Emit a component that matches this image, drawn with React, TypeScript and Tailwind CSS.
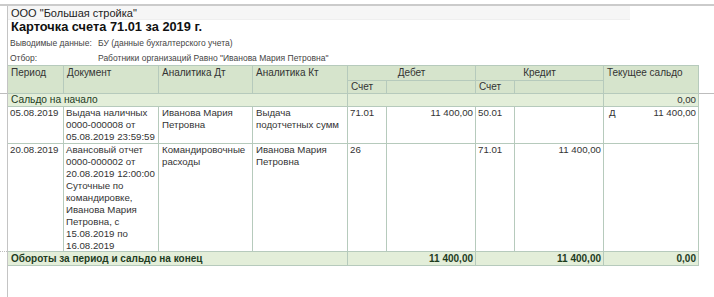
import React from "react";

const B = "border-[#b6cabc]";

function Cell({
  children,
  className = "",
}: {
  children?: React.ReactNode;
  className?: string;
}) {
  return (
    <div className={`border-r border-b ${B} overflow-visible ${className}`}>{children}</div>
  );
}

function Lines({ lines }: { lines: string[] }) {
  return (
    <>
      {lines.map((l, i) => (
        <div key={i} className="whitespace-nowrap">
          {l}
        </div>
      ))}
    </>
  );
}

export default function App() {
  const hdr = "bg-[#d6e4cc] text-[#333] text-[10px]";
  const body = "bg-white text-[#333] text-[9.7px] leading-[12px]";
  const sum = "bg-[#e3eed9] text-[#1e3c1e]";
  return (
    <div className="relative w-[714px] h-[297px] bg-white overflow-hidden font-['Liberation_Sans',Arial,sans-serif]">
      <div className="h-[4px]" />
      <div className="h-[2px] bg-[#cbcbcb]" />
      <div className="flex">
        <div className="w-[8px] h-[291px] shrink-0 border-r border-[#c4c4c4]" />
        <div className="flex-1">
          <div className="w-[622px] h-[14px] bg-[#f6f6f6] border-b border-[#efefef] pl-[3px] text-[11px] leading-[14px] text-[#222]">
            ООО "Большая стройка"
          </div>
          <div className="h-[16px] pl-[3px] text-[12.8px] font-bold leading-[14px] text-[#111]">
            Карточка счета 71.01 за 2019 г.
          </div>
          <div className="flex h-[15px] text-[8.5px] leading-[15px] text-[#444]">
            <div className="w-[90px] pl-[2px]">Выводимые данные:</div>
            <div>БУ (данные бухгалтерского учета)</div>
          </div>
          <div className="flex h-[14px] text-[8.5px] leading-[14px] text-[#444]">
            <div className="w-[90px] pl-[2px]">Отбор:</div>
            <div>Работники организаций Равно "Иванова Мария Петровна"</div>
          </div>

          <div
            className={`grid w-[691px] border-t ${B} grid-cols-[56px_95px_94px_95px_39px_89px_39px_89px_95px] grid-rows-[15px_13px_13px_37px_108px_14px]`}
          >
            {/* header */}
            <Cell className={`${hdr} row-span-2 pl-[3px] leading-[14px]`}>Период</Cell>
            <Cell className={`${hdr} row-span-2 pl-[3px] leading-[14px]`}>Документ</Cell>
            <Cell className={`${hdr} row-span-2 pl-[3px] leading-[14px]`}>Аналитика Дт</Cell>
            <Cell className={`${hdr} row-span-2 pl-[3px] leading-[14px]`}>Аналитика Кт</Cell>
            <Cell className={`${hdr} col-span-2 text-center leading-[14px]`}>Дебет</Cell>
            <Cell className={`${hdr} col-span-2 text-center leading-[14px]`}>Кредит</Cell>
            <Cell className={`${hdr} row-span-2 pl-[3px] leading-[14px]`}>Текущее сальдо</Cell>
            <Cell className={`${hdr} pl-[3px] leading-[12px]`}>Счет</Cell>
            <Cell className={hdr} />
            <Cell className={`${hdr} pl-[3px] leading-[12px]`}>Счет</Cell>
            <Cell className={hdr} />

            {/* opening balance */}
            <Cell className={`${sum} col-span-4 pl-[3px] text-[10.2px] leading-[12px]`}>Сальдо на начало</Cell>
            <Cell className={`${sum} col-span-4`} />
            <Cell className={`${sum} pr-[2px] text-right text-[9.7px] leading-[12px] text-[#333]`}>0,00</Cell>

            {/* row 1 */}
            <Cell className={`${body} pl-[2px]`}>05.08.2019</Cell>
            <Cell className={`${body} pl-[2px]`}>
              <Lines lines={["Выдача наличных", "0000-000008 от", "05.08.2019 23:59:59"]} />
            </Cell>
            <Cell className={`${body} pl-[3px]`}>
              <Lines lines={["Иванова Мария", "Петровна"]} />
            </Cell>
            <Cell className={`${body} pl-[3px]`}>
              <Lines lines={["Выдача", "подотчетных сумм"]} />
            </Cell>
            <Cell className={`${body} pl-[2px]`}>71.01</Cell>
            <Cell className={`${body} pr-[2px] text-right`}>11&nbsp;400,00</Cell>
            <Cell className={`${body} pl-[2px]`}>50.01</Cell>
            <Cell className={body} />
            <Cell className={`${body} flex justify-between pl-[5px] pr-[2px]`}>
              <span>Д</span>
              <span>11&nbsp;400,00</span>
            </Cell>

            {/* row 2 */}
            <Cell className={`${body} pl-[2px]`}>20.08.2019</Cell>
            <Cell className={`${body} pl-[2px]`}>
              <Lines
                lines={[
                  "Авансовый отчет",
                  "0000-000002 от",
                  "20.08.2019 12:00:00",
                  "Суточные по",
                  "командировке,",
                  "Иванова Мария",
                  "Петровна, с",
                  "15.08.2019 по",
                  "16.08.2019",
                ]}
              />
            </Cell>
            <Cell className={`${body} pl-[3px]`}>
              <Lines lines={["Командировочные", "расходы"]} />
            </Cell>
            <Cell className={`${body} pl-[3px]`}>
              <Lines lines={["Иванова Мария", "Петровна"]} />
            </Cell>
            <Cell className={`${body} pl-[2px]`}>26</Cell>
            <Cell className={body} />
            <Cell className={`${body} pl-[2px]`}>71.01</Cell>
            <Cell className={`${body} pr-[2px] text-right`}>11&nbsp;400,00</Cell>
            <Cell className={body} />

            {/* totals */}
            <Cell className={`${sum} col-span-4 pl-[3px] text-[10px] font-bold leading-[13px]`}>
              Обороты за период и сальдо на конец
            </Cell>
            <Cell className={`${sum} col-span-2 pr-[2px] text-right text-[10px] font-bold leading-[13px]`}>
              11&nbsp;400,00
            </Cell>
            <Cell className={`${sum} col-span-2 pr-[2px] text-right text-[10px] font-bold leading-[13px]`}>
              11&nbsp;400,00
            </Cell>
            <Cell className={`${sum} pr-[2px] text-right text-[10px] font-bold leading-[13px]`}>0,00</Cell>
          </div>
        </div>
      </div>

      {/* row-group marks in the margins */}
      <div className="absolute left-0 top-[93px] w-[7px] h-px bg-[#bdbdbd]" />
      <div className="absolute left-[699px] top-[93px] w-[15px] h-px bg-[#bdbdbd]" />
      <div className="absolute left-0 top-[251px] w-[7px] border-t border-dotted border-[#bdbdbd]" />
    </div>
  );
}
